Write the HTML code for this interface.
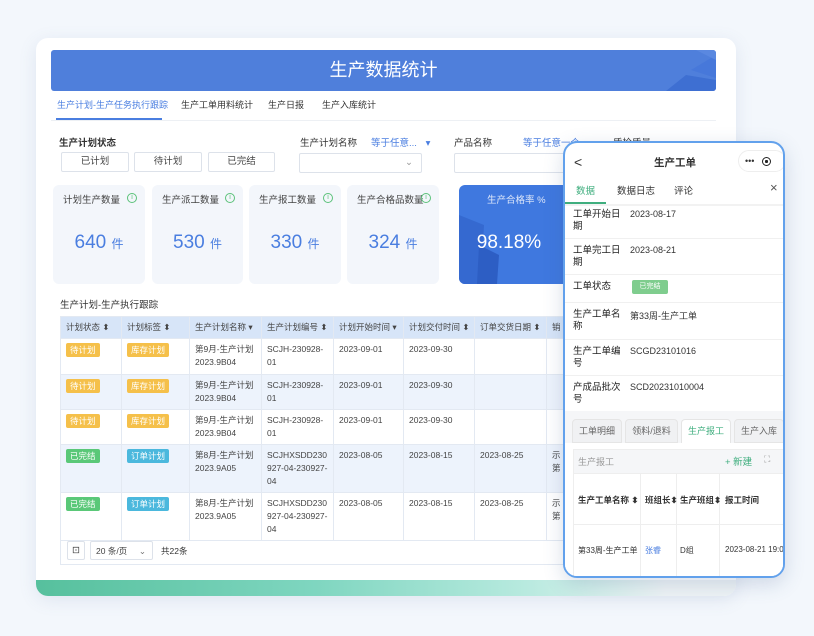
<!DOCTYPE html>
<html><head><meta charset="utf-8"><style>
*{margin:0;padding:0;box-sizing:border-box}
body{width:814px;height:636px;background:#f3f7fc;font-family:"Liberation Sans","Noto Sans CJK SC",sans-serif;position:relative;overflow:hidden;color:#333}
.a{position:absolute}
.card{left:36px;top:38px;width:700px;height:558px;background:#fff;border-radius:12px;box-shadow:0 4px 18px rgba(80,110,160,.12);overflow:hidden}
.green{left:0;bottom:0;width:700px;height:16px;background:linear-gradient(90deg,#56c09d,#7fd6c0 40%,#b8eadf 70%,#eef3f5 90%)}
.banner{left:51px;top:50px;width:665px;height:41px;background:#4f7fdb;border-radius:3px;color:#fff;font-size:18px;text-align:center;line-height:41px;overflow:hidden}
.t{font-size:9.5px;white-space:nowrap}
.btn{height:20px;border:1px solid #dde2ea;border-radius:2px;font-size:9.5px;text-align:center;line-height:18px;color:#444;background:#fff}
.stat{top:185px;height:99px;background:#f3f6fb;border-radius:6px}
.stat .l{position:absolute;left:10px;top:7px;font-size:9.5px;color:#444;white-space:nowrap}
.stat .i{position:absolute;right:8px;top:8px;width:10px;height:10px;border:1px solid #5cc27a;border-radius:50%;font-size:7px;color:#5cc27a;text-align:center;line-height:8px}
.stat .v{position:absolute;left:0;right:0;top:47px;text-align:center;color:#4a7ee0;font-size:19px}
.stat .v small{font-size:12px}
table{border-collapse:collapse;table-layout:fixed;position:absolute;left:60px;top:316px;width:510px;font-size:8.5px;color:#444}
td,th{border:1px solid #e3e9f2;vertical-align:top;padding:4px 5px;text-align:left;font-weight:normal;line-height:13px;white-space:nowrap;overflow:hidden}
th{background:#d7e5f8;height:22px;padding:4px 5px;vertical-align:middle}
tr.b td{background:#edf3fc}
.tag{display:inline-block;color:#fff;font-size:8.5px;padding:0 4px;line-height:14px;border-radius:2px}
.y{background:#f5c04a}.g{background:#5ac878}.c{background:#4bb8dd}
.phone{left:563px;top:141px;width:222px;height:437px;border:2px solid #62a1ec;border-radius:14px;background:#fff;overflow:hidden;box-shadow:0 6px 20px rgba(60,90,140,.2)}
.pr{position:absolute;left:8px;width:52px;font-size:9.5px;color:#222;line-height:12px}
.pv{position:absolute;left:65px;font-size:9px;color:#333}
.sep{position:absolute;left:0;width:220px;height:1px;background:#f0f0f0}
</style></head><body>
<div class="a card">
<div class="a green"></div>
</div>
<div class="a banner">生产数据统计
<svg class="a" style="right:0;top:0" width="80" height="41"><polygon points="30,41 50,25 80,30 80,41" fill="#3e6fd2"/><polygon points="55,20 80,5 80,28" fill="#4778da"/><polygon points="60,0 80,0 80,10" fill="#5a88e0"/></svg></div>
<div class="a t" style="left:57px;top:98px;color:#4a7ee0;font-size:9px">生产计划-生产任务执行跟踪</div>
<div class="a" style="left:56px;top:118px;width:106px;height:2px;background:#4a7ee0"></div>
<div class="a t" style="left:181px;top:98px;font-size:9px">生产工单用料统计</div>
<div class="a t" style="left:268px;top:98px;font-size:9px">生产日报</div>
<div class="a t" style="left:322px;top:98px;font-size:9px">生产入库统计</div>
<div class="a" style="left:51px;top:120px;width:665px;height:1px;background:#edf0f4"></div>
<div class="a t" style="left:59px;top:135px;font-weight:bold;color:#333">生产计划状态</div>
<div class="a btn" style="left:61px;top:152px;width:68px">已计划</div>
<div class="a btn" style="left:134px;top:152px;width:68px">待计划</div>
<div class="a btn" style="left:208px;top:152px;width:67px">已完结</div>
<div class="a t" style="left:300px;top:135px">生产计划名称</div>
<div class="a t" style="left:371px;top:135px;color:#4a7ee0">等于任意... <span style="margin-left:6px">▾</span></div>
<div class="a btn" style="left:299px;top:153px;width:123px;text-align:right;padding-right:8px;color:#999">⌄</div>
<div class="a t" style="left:454px;top:135px">产品名称</div>
<div class="a t" style="left:523px;top:135px;color:#4a7ee0">等于任意一个 ▾</div>
<div class="a t" style="left:613px;top:135px">质检质量</div>
<div class="a btn" style="left:454px;top:153px;width:120px"></div>
<div class="a stat" style="left:53px;width:92px"><span class="l">计划生产数量</span><span class="i">i</span><div class="v">640 <small>件</small></div></div>
<div class="a stat" style="left:152px;width:91px"><span class="l">生产派工数量</span><span class="i">i</span><div class="v">530 <small>件</small></div></div>
<div class="a stat" style="left:249px;width:92px"><span class="l">生产报工数量</span><span class="i">i</span><div class="v">330 <small>件</small></div></div>
<div class="a stat" style="left:347px;width:92px"><span class="l">生产合格品数量</span><span class="i">i</span><div class="v">324 <small>件</small></div></div>
<div class="a stat" style="left:459px;width:110px;background:#3f78df;overflow:hidden"><svg class="a" style="left:0;top:0" width="110" height="99"><polygon points="0,30 25,40 22,99 0,99" fill="#3569d0"/><polygon points="20,60 40,70 38,99 18,99" fill="#2d5ec4"/></svg><span class="l" style="left:28px;color:#dfe8fa">生产合格率 %</span><div class="v" style="color:#fff;left:-10px">98.18%</div></div>
<div class="a t" style="left:60px;top:297px">生产计划-生产执行跟踪</div>
<table>
<colgroup><col style="width:61px"><col style="width:68px"><col style="width:72px"><col style="width:72px"><col style="width:70px"><col style="width:71px"><col style="width:72px"><col style="width:24px"></colgroup>
<tr><th>计划状态 ⬍</th><th>计划标签 ⬍</th><th>生产计划名称 ▾</th><th>生产计划编号 ⬍</th><th>计划开始时间 ▾</th><th>计划交付时间 ⬍</th><th>订单交货日期 ⬍</th><th>销</th></tr>
<tr style="height:36px"><td><span class="tag y">待计划</span></td><td><span class="tag y">库存计划</span></td><td>第9月-生产计划<br>2023.9B04</td><td>SCJH-230928-<br>01</td><td>2023-09-01</td><td>2023-09-30</td><td></td><td></td></tr>
<tr class="b" style="height:35px"><td><span class="tag y">待计划</span></td><td><span class="tag y">库存计划</span></td><td>第9月-生产计划<br>2023.9B04</td><td>SCJH-230928-<br>01</td><td>2023-09-01</td><td>2023-09-30</td><td></td><td></td></tr>
<tr style="height:35px"><td><span class="tag y">待计划</span></td><td><span class="tag y">库存计划</span></td><td>第9月-生产计划<br>2023.9B04</td><td>SCJH-230928-<br>01</td><td>2023-09-01</td><td>2023-09-30</td><td></td><td></td></tr>
<tr class="b" style="height:47px"><td><span class="tag g">已完结</span></td><td><span class="tag c">订单计划</span></td><td>第8月-生产计划<br>2023.9A05</td><td>SCJHXSDD230<br>927-04-230927-<br>04</td><td>2023-08-05</td><td>2023-08-15</td><td>2023-08-25</td><td>示<br>第</td></tr>
<tr style="height:45px"><td><span class="tag g">已完结</span></td><td><span class="tag c">订单计划</span></td><td>第8月-生产计划<br>2023.9A05</td><td>SCJHXSDD230<br>927-04-230927-<br>04</td><td>2023-08-05</td><td>2023-08-15</td><td>2023-08-25</td><td>示<br>第</td></tr>
</table>
<div class="a" style="left:60px;top:536px;width:510px;height:29px;border:1px solid #e3e9f2;border-top:none"></div>
<div class="a btn" style="left:67px;top:541px;width:18px;height:19px">⊡</div>
<div class="a btn" style="left:90px;top:541px;width:63px;height:19px;text-align:left;padding-left:5px;font-size:8.5px">20 条/页 <span style="float:right;margin-right:6px;color:#777">⌄</span></div>
<div class="a t" style="left:161px;top:545px;font-size:8.5px">共22条</div>

<div class="a phone">
<div class="a" style="left:9px;top:11px;font-size:14px;color:#333">&lt;</div>
<div class="a" style="left:0;width:220px;top:12px;text-align:center;font-size:10.5px;font-weight:bold">生产工单</div>
<div class="a" style="left:173px;top:7px;width:48px;height:22px;border:1px solid #eee;border-radius:11px;font-size:9px;line-height:20px;padding-left:6px">•••&nbsp;&nbsp;&nbsp;<span style="display:inline-block;width:9px;height:9px;border:1.5px solid #222;border-radius:50%;vertical-align:middle;background:radial-gradient(#222 30%,#fff 35%)"></span></div>
<div class="a" style="left:11px;top:40px;font-size:9.5px;color:#3fae7e">数据</div>
<div class="a" style="left:52px;top:40px;font-size:9.5px">数据日志</div>
<div class="a" style="left:109px;top:40px;font-size:9.5px">评论</div>
<div class="a" style="left:205px;top:37px;font-size:13px;color:#555">×</div>
<div class="a" style="left:0;top:59px;width:41px;height:2px;background:#3fae7e"></div>
<div class="a" style="left:0;top:61px;width:220px;height:2px;background:#f2f2f2"></div>
<div class="pr" style="top:66px">工单开始日期</div><div class="pv" style="top:66px">2023-08-17</div>
<div class="sep" style="top:95px"></div>
<div class="pr" style="top:102px">工单完工日期</div><div class="pv" style="top:102px">2023-08-21</div>
<div class="sep" style="top:131px"></div>
<div class="pr" style="top:138px">工单状态</div><div class="a" style="left:67px;top:137px;width:36px;height:14px;background:#7fcd8e;border-radius:2px;color:#fff;font-size:7px;text-align:center;line-height:14px">已完结</div>
<div class="sep" style="top:159px"></div>
<div class="pr" style="top:166px">生产工单名称</div><div class="pv" style="top:166px">第33周-生产工单</div>
<div class="sep" style="top:196px"></div>
<div class="pr" style="top:203px">生产工单编号</div><div class="pv" style="top:203px">SCGD23101016</div>
<div class="sep" style="top:232px"></div>
<div class="pr" style="top:239px">产成品批次号</div><div class="pv" style="top:239px">SCD20231010004</div>
<div class="a" style="left:0;top:268px;width:220px;height:170px;background:#f5f6f8"></div>
<div class="a" style="left:7px;top:276px;width:50px;height:24px;background:#f0f1f3;border:1px solid #e5e5e5;border-radius:4px 4px 0 0;font-size:9px;color:#666;text-align:center;line-height:22px">工单明细</div>
<div class="a" style="left:60px;top:276px;width:53px;height:24px;background:#f0f1f3;border:1px solid #e5e5e5;border-radius:4px 4px 0 0;font-size:9px;color:#666;text-align:center;line-height:22px">领料/退料</div>
<div class="a" style="left:116px;top:276px;width:50px;height:25px;background:#fff;border:1px solid #e5e5e5;border-bottom:none;border-radius:4px 4px 0 0;font-size:9px;color:#3fae7e;text-align:center;line-height:22px">生产报工</div>
<div class="a" style="left:169px;top:276px;width:50px;height:24px;background:#f0f1f3;border:1px solid #e5e5e5;border-radius:4px 4px 0 0;font-size:9px;color:#666;text-align:center;line-height:22px">生产入库</div>
<div class="a" style="left:0;top:300px;width:220px;height:140px;background:#fff"></div>
<div class="a" style="left:8px;top:306px;width:212px;height:25px;background:#f5f6f8;border:1px solid #eee"></div>
<div class="a" style="left:13px;top:312px;font-size:9px;color:#999">生产报工</div>
<div class="a" style="left:160px;top:311px;font-size:9.5px;color:#3fae7e">+ 新建</div>
<div class="a" style="left:199px;top:311px;font-size:9px;color:#999">⛶</div>
<div class="a" style="left:8px;top:331px;width:212px;height:110px;border-left:1px solid #eee"></div>
<div class="a" style="left:75px;top:331px;width:1px;height:110px;background:#eee"></div>
<div class="a" style="left:111px;top:331px;width:1px;height:110px;background:#eee"></div>
<div class="a" style="left:154px;top:331px;width:1px;height:110px;background:#eee"></div>
<div class="a" style="left:8px;top:381px;width:212px;height:1px;background:#eee"></div>
<div class="a" style="left:13px;top:351px;font-size:8.5px;font-weight:bold;white-space:nowrap">生产工单名称 ⬍</div>
<div class="a" style="left:80px;top:351px;font-size:8.5px;font-weight:bold;white-space:nowrap">班组长⬍</div>
<div class="a" style="left:115px;top:351px;font-size:8.5px;font-weight:bold;white-space:nowrap">生产班组⬍</div>
<div class="a" style="left:160px;top:351px;font-size:8.5px;font-weight:bold;white-space:nowrap">报工时间</div>
<div class="a" style="left:13px;top:402px;font-size:8px;white-space:nowrap">第33周-生产工单</div>
<div class="a" style="left:80px;top:402px;font-size:8px;color:#4a7ee0">张睿</div>
<div class="a" style="left:115px;top:402px;font-size:8px">D组</div>
<div class="a" style="left:160px;top:402px;font-size:8px;white-space:nowrap">2023-08-21 19:07</div>
</div>
</body></html>
